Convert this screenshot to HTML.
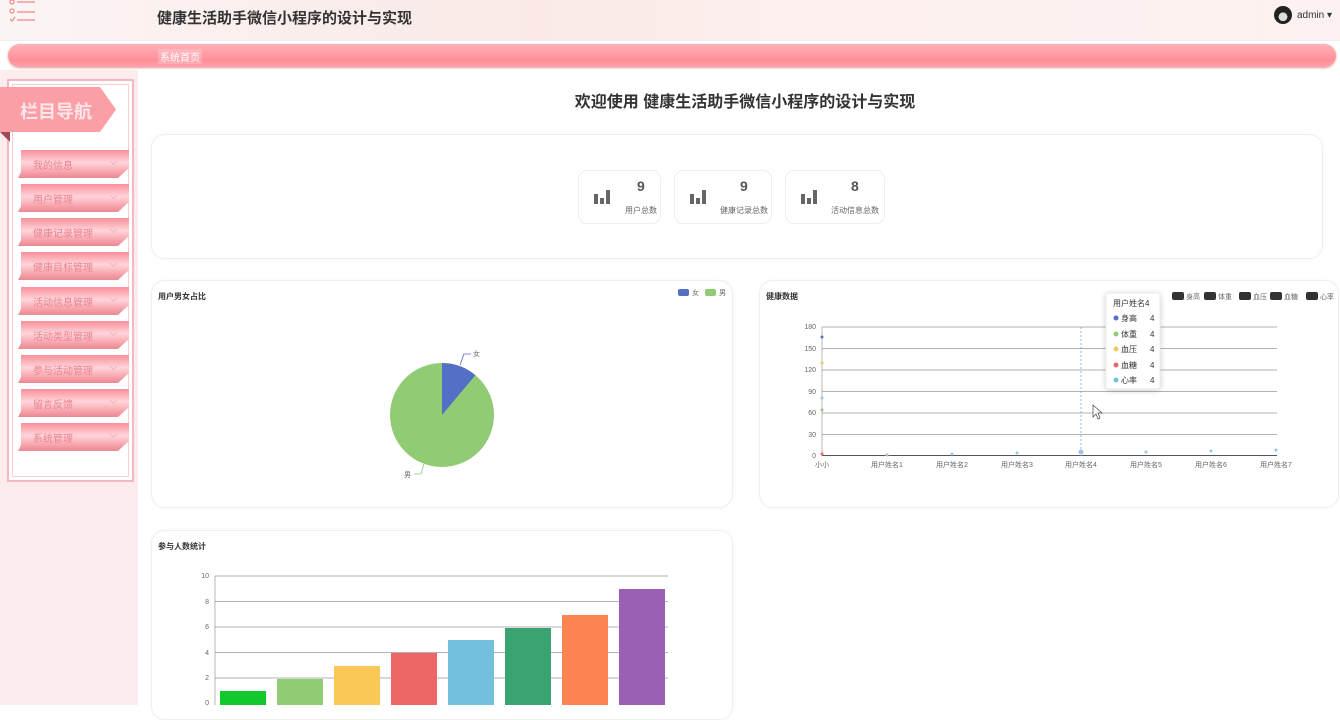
<!DOCTYPE html>
<html><head><meta charset="utf-8"><style>
*{margin:0;padding:0;box-sizing:border-box}
body{width:1340px;height:705px;overflow:hidden;background:#fff;font-family:"Liberation Sans","Noto Sans CJK SC",sans-serif;position:relative;color:#333}
.hdr{position:absolute;left:0;top:0;width:1340px;height:41px;background:linear-gradient(90deg,#fbf5f4 0%,#fae9e7 40%,#fdf0ee 60%,#fbf2f1 100%);border-bottom:1px solid #eee}
.hdr .t{position:absolute;left:157px;top:7px;font-size:15px;font-weight:bold;color:#333}
.nav{position:absolute;left:8px;top:44px;width:1328px;height:23px;border-radius:12px;background:linear-gradient(180deg,#ffb2b8,#ff8f99 70%,#ffa0a8);box-shadow:0 1px 2px #d99}
.nav span{position:absolute;left:150px;top:5px;font-size:10px;color:#fff;background:rgba(255,255,255,.2);padding:0 2px}
.lcol{position:absolute;left:0;top:70px;width:138px;height:635px;background:#fcecee}
.sbox{position:absolute;left:7px;top:79px;width:127px;height:403px;border:2px solid #f4b9c0;background:#fff}
.sbox:before{content:"";position:absolute;left:3px;top:3px;right:3px;bottom:3px;border:1px solid #f7cfd4}
.tag{position:absolute;left:0;top:87px;width:116px;height:45px;background:#fb9ea6;clip-path:polygon(0 0,100px 0,116px 50%,100px 100%,0 100%)}
.tag span{position:absolute;left:20px;top:11px;font-size:18px;font-weight:bold;color:#fde6e8}
.tri{position:absolute;left:0;top:132px;width:10px;height:10px;background:#a04a55;clip-path:polygon(0 0,100% 0,100% 100%)}
.mi{position:absolute;left:18px;width:111px;height:28px;background:linear-gradient(180deg,#f98f9a,#ffd5da 45%,#f7a1aa 80%,#e88a94);clip-path:polygon(3px 0,100% 0,100% 18px,100px 100%,0 100%,3px 22px)}
.mi span{position:absolute;left:15px;top:7px;font-size:10px;color:#e88592}
.mi i{position:absolute;left:93px;top:9px;width:5px;height:5px;border-right:1px solid #f3b0b8;border-bottom:1px solid #f3b0b8;transform:rotate(45deg)}
.ttl{position:absolute;left:0;width:1490px;top:88px;text-align:center;font-size:16px;font-weight:bold;color:#333}
.panel{position:absolute;background:#fff;border:1px solid #f3eeee;border-radius:14px;box-shadow:0 0 4px rgba(0,0,0,.04)}
.card{position:absolute;top:170px;height:54px;border:1px solid #eee;border-radius:9px;background:#fff}
.card .n{position:absolute;top:7px;font-size:14px;font-weight:bold;color:#555}
.card .l{position:absolute;top:34px;font-size:8px;color:#666}
.card svg{position:absolute;left:15px;top:19px}
.ct{position:absolute;font-size:8px;font-weight:bold;color:#333}
</style></head><body>
<div class="hdr"><svg style="position:absolute;left:9px;top:0" width="30" height="24"><g stroke="#e88" fill="none" stroke-width="1.2"><circle cx="3" cy="2" r="2"/><line x1="8" y1="2" x2="26" y2="2"/><circle cx="3" cy="11" r="2"/><line x1="8" y1="12" x2="26" y2="12"/><path d="M1 19l2 2 3-4"/><line x1="8" y1="20" x2="26" y2="20"/></g></svg>
<div class="t">健康生活助手微信小程序的设计与实现</div>
<div style="position:absolute;left:1274px;top:6px;width:18px;height:18px;border-radius:50%;background:radial-gradient(circle at 50% 60%,#ddd 0 30%,#222 32%)"></div>
<div style="position:absolute;left:1297px;top:10px;font-size:10px;color:#333">admin ▾</div></div>
<div class="nav"><span>系统首页</span></div>
<div class="lcol"></div>
<div class="sbox"></div>
<div class="tag"><span>栏目导航</span></div><div class="tri"></div>
<div class="mi" style="top:150px"><span>我的信息</span><i></i></div>
<div class="mi" style="top:184px"><span>用户管理</span><i></i></div>
<div class="mi" style="top:218px"><span>健康记录管理</span><i></i></div>
<div class="mi" style="top:252px"><span>健康目标管理</span><i></i></div>
<div class="mi" style="top:287px"><span>活动信息管理</span><i></i></div>
<div class="mi" style="top:321px"><span>活动类型管理</span><i></i></div>
<div class="mi" style="top:355px"><span>参与活动管理</span><i></i></div>
<div class="mi" style="top:389px"><span>留言反馈</span><i></i></div>
<div class="mi" style="top:423px"><span>系统管理</span><i></i></div>
<div class="ttl">欢迎使用 健康生活助手微信小程序的设计与实现</div>
<div class="panel" style="left:151px;top:134px;width:1172px;height:125px"></div>
<div class="card" style="left:578px;width:83px"><svg width="16" height="14"><g fill="#666"><rect x="0" y="4" width="4" height="10"/><rect x="6" y="8" width="4" height="6"/><rect x="12" y="0" width="4" height="14"/></g></svg><div class="n" style="left:58px">9</div><div class="l" style="left:46px">用户总数</div></div>
<div class="card" style="left:674px;width:98px"><svg width="16" height="14"><g fill="#666"><rect x="0" y="4" width="4" height="10"/><rect x="6" y="8" width="4" height="6"/><rect x="12" y="0" width="4" height="14"/></g></svg><div class="n" style="left:65px">9</div><div class="l" style="left:45px">健康记录总数</div></div>
<div class="card" style="left:785px;width:100px"><svg width="16" height="14"><g fill="#666"><rect x="0" y="4" width="4" height="10"/><rect x="6" y="8" width="4" height="6"/><rect x="12" y="0" width="4" height="14"/></g></svg><div class="n" style="left:65px">8</div><div class="l" style="left:45px">活动信息总数</div></div>

<div class="panel" style="left:151px;top:280px;width:582px;height:228px"></div>
<div class="ct" style="left:158px;top:291px">用户男女占比</div>
<svg style="position:absolute;left:151px;top:280px" width="582" height="228" font-size="7" font-family="Liberation Sans,Noto Sans CJK SC,sans-serif">
<rect x="527" y="9" width="11" height="7" rx="2" fill="#5470c6"/><text x="541" y="15" fill="#666">女</text>
<rect x="554" y="9" width="11" height="7" rx="2" fill="#91cc75"/><text x="568" y="15" fill="#666">男</text>
<circle cx="291" cy="135" r="52" fill="#91cc75"/>
<path d="M291 135 L291 83 A52 52 0 0 1 324.4 95.2 Z" fill="#5470c6"/>
<polyline points="309,85 313,74 320,74" fill="none" stroke="#5470c6" stroke-width=".8"/><text x="322" y="76" fill="#666">女</text>
<polyline points="273,184 270,194 263,194" fill="none" stroke="#91cc75" stroke-width=".8"/><text x="253" y="197" fill="#666">男</text>
</svg>

<div class="panel" style="left:759px;top:280px;width:580px;height:228px"></div>
<div class="ct" style="left:766px;top:291px">健康数据</div>
<svg style="position:absolute;left:759px;top:280px" width="581" height="228" font-size="7" font-family="Liberation Sans,Noto Sans CJK SC,sans-serif" fill="#666">
<g fill="#333"><rect x="413" y="12" width="12" height="8" rx="2"/><rect x="445" y="12" width="12" height="8" rx="2"/><rect x="480" y="12" width="12" height="8" rx="2"/><rect x="511" y="12" width="12" height="8" rx="2"/><rect x="547" y="12" width="12" height="8" rx="2"/></g>
<text x="427" y="19">身高</text><text x="459" y="19">体重</text><text x="494" y="19">血压</text><text x="525" y="19">血糖</text><text x="561" y="19">心率</text>
<g stroke="#999" stroke-width=".8"><line x1="63" y1="47" x2="518" y2="47"/><line x1="63" y1="68.5" x2="518" y2="68.5"/><line x1="63" y1="90" x2="518" y2="90"/><line x1="63" y1="111.5" x2="518" y2="111.5"/><line x1="63" y1="133" x2="518" y2="133"/><line x1="63" y1="154.5" x2="518" y2="154.5"/></g>
<line x1="63" y1="175.5" x2="518" y2="175.5" stroke="#555"/><line x1="63" y1="47" x2="63" y2="176" stroke="#888" stroke-width=".6"/>
<line x1="322" y1="47" x2="322" y2="176" stroke="#6aa8d8" stroke-dasharray="2,2" stroke-width=".8"/>
<g text-anchor="end"><text x="57" y="49">180</text><text x="57" y="71">150</text><text x="57" y="92">120</text><text x="57" y="114">90</text><text x="57" y="135">60</text><text x="57" y="157">30</text><text x="57" y="178">0</text></g>
<g text-anchor="middle"><text x="63" y="187">小小</text><text x="128" y="187">用户姓名1</text><text x="193" y="187">用户姓名2</text><text x="258" y="187">用户姓名3</text><text x="322" y="187">用户姓名4</text><text x="387" y="187">用户姓名5</text><text x="452" y="187">用户姓名6</text><text x="517" y="187">用户姓名7</text></g>
<g fill="#9cc4e4"><circle cx="63" cy="57" r="1.5" fill="#5470c6"/><circle cx="63" cy="83" r="1.5" fill="#fac858"/><circle cx="63" cy="118" r="1.5"/><circle cx="63" cy="130" r="1.5" fill="#91cc75"/><circle cx="63" cy="174" r="1.5" fill="#ee6666"/><circle cx="128" cy="175" r="1.5"/><circle cx="193" cy="174" r="1.5"/><circle cx="258" cy="173" r="1.5"/><circle cx="322" cy="172" r="2.5"/><circle cx="387" cy="172" r="1.5"/><circle cx="452" cy="171" r="1.5"/><circle cx="517" cy="170" r="1.5"/></g>
<rect x="347" y="13" width="54" height="96" rx="3" fill="#fff" stroke="#eee" style="filter:drop-shadow(0 1px 3px rgba(0,0,0,.2))"/>
<g font-size="8" fill="#333"><text x="354" y="26">用户姓名4</text>
<circle cx="357" cy="38" r="2.5" fill="#5470c6"/><text x="362" y="41">身高</text><text x="391" y="41">4</text>
<circle cx="357" cy="54" r="2.5" fill="#91cc75"/><text x="362" y="57">体重</text><text x="391" y="57">4</text>
<circle cx="357" cy="69" r="2.5" fill="#fac858"/><text x="362" y="72">血压</text><text x="391" y="72">4</text>
<circle cx="357" cy="85" r="2.5" fill="#ee6666"/><text x="362" y="88">血糖</text><text x="391" y="88">4</text>
<circle cx="357" cy="100" r="2.5" fill="#73c0de"/><text x="362" y="103">心率</text><text x="391" y="103">4</text></g>
<path d="M334 125 l0 12 3 -3 2 5 2 -1 -2 -5 4 0 z" fill="#fff" stroke="#444" stroke-width=".7"/>
</svg>

<div class="panel" style="left:151px;top:530px;width:582px;height:190px"></div>
<div class="ct" style="left:158px;top:541px">参与人数统计</div>
<svg style="position:absolute;left:151px;top:530px" width="582" height="175" font-size="7" font-family="Liberation Sans,sans-serif" fill="#666">
<g stroke="#999" stroke-width=".8"><line x1="64" y1="46" x2="517" y2="46"/><line x1="64" y1="71.5" x2="517" y2="71.5"/><line x1="64" y1="97" x2="517" y2="97"/><line x1="64" y1="122.5" x2="517" y2="122.5"/><line x1="64" y1="148" x2="517" y2="148"/></g>
<line x1="64" y1="46" x2="64" y2="175" stroke="#888" stroke-width=".6"/>
<g text-anchor="end"><text x="58" y="48">10</text><text x="58" y="74">8</text><text x="58" y="99">6</text><text x="58" y="125">4</text><text x="58" y="150">2</text><text x="58" y="175">0</text></g>
<rect x="69" y="161" width="46" height="14" fill="#11c92c"/>
<rect x="126" y="149" width="46" height="26" fill="#91cc75"/>
<rect x="183" y="136" width="46" height="39" fill="#fac858"/>
<rect x="240" y="123" width="46" height="52" fill="#ee6666"/>
<rect x="297" y="110" width="46" height="65" fill="#73c0de"/>
<rect x="354" y="98" width="46" height="77" fill="#3ba272"/>
<rect x="411" y="85" width="46" height="90" fill="#fc8452"/>
<rect x="468" y="59" width="46" height="116" fill="#9a60b4"/>
</svg>
</body></html>
